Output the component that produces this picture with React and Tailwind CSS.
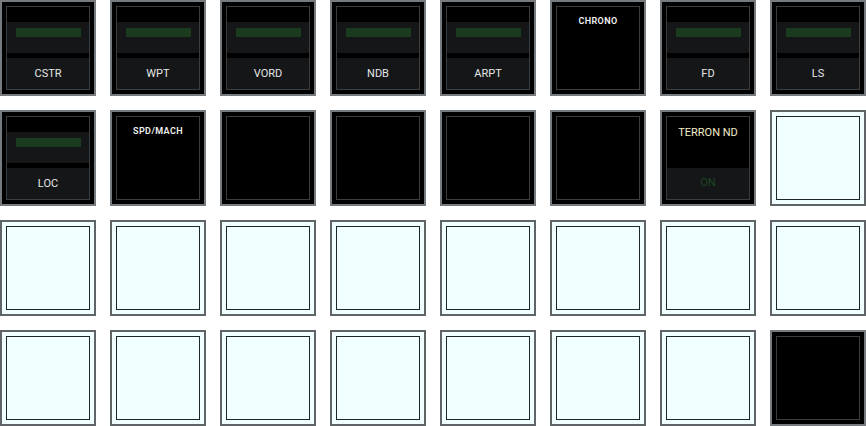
// Panneau de boutons 8x4 — style cockpit sombre + cases vides claires.

const ROWS = [
  [
    { kind: 'toggle', label: 'CSTR' },
    { kind: 'toggle', label: 'WPT' },
    { kind: 'toggle', label: 'VORD' },
    { kind: 'toggle', label: 'NDB' },
    { kind: 'toggle', label: 'ARPT' },
    { kind: 'title', label: 'CHRONO' },
    { kind: 'toggle', label: 'FD' },
    { kind: 'toggle', label: 'LS' },
  ],
  [
    { kind: 'toggle', label: 'LOC' },
    { kind: 'title', label: 'SPD/MACH' },
    { kind: 'empty' },
    { kind: 'empty' },
    { kind: 'empty' },
    { kind: 'empty' },
    { kind: 'status', label: 'TERRON ND', status: 'ON' },
    { kind: 'light' },
  ],
  Array.from({ length: 8 }, () => ({ kind: 'light' })),
  [...Array.from({ length: 7 }, () => ({ kind: 'light' })), { kind: 'empty' }],
];

function DarkShell({ children }) {
  return (
    <div className="w-24 h-24 border-2 border-[#767b80] bg-black p-1">
      <div className="h-full border border-[#3b3d3f] flex flex-col">{children}</div>
    </div>
  );
}

function Toggle({ label }) {
  return (
    <DarkShell>
      <div className="h-[15px]" />
      <div className="h-[31px] bg-[#141618] flex justify-center pt-[6px]">
        <div className="w-[65px] h-[9px] bg-[#1a3b1d]" />
      </div>
      <div className="h-[5px]" />
      <div className="flex-1 bg-[#141618] flex items-center justify-center pt-[1px]">
        <span className="font-['Roboto'] text-[11px] text-[#e6e6e6]">{label}</span>
      </div>
    </DarkShell>
  );
}

function Title({ label }) {
  return (
    <div className="w-24 h-24 border-2 border-[#767b80] bg-black p-1">
      <div className="h-full border border-[#3b3d3f] pt-[8px] text-center font-['Roboto'] font-semibold text-[9px] leading-[12px] text-[#f2f2f2] tracking-[0.4px]">
        {label}
      </div>
    </div>
  );
}

function Status({ label, status }) {
  return (
    <DarkShell>
      <div className="flex-1 flex items-start justify-center pt-[8px]">
        <span className="font-['Roboto'] text-[11px] text-[#f3ecc8]">{label}</span>
      </div>
      <div className="h-[31px] bg-[#141618] flex items-center justify-center">
        <span className="font-['Roboto'] text-[11px] text-[#1f4622]">{status}</span>
      </div>
    </DarkShell>
  );
}

function Light() {
  return (
    <div className="w-24 h-24 border-2 border-[#5f6566] bg-[#f0ffff] p-1">
      <div className="h-full border border-[#1e2626]" />
    </div>
  );
}

function Cell({ cell }) {
  if (cell.kind === 'toggle') return <Toggle label={cell.label} />;
  if (cell.kind === 'title') return <Title label={cell.label} />;
  if (cell.kind === 'status') return <Status label={cell.label} status={cell.status} />;
  if (cell.kind === 'light') return <Light />;
  return <DarkShell />;
}

export default function App() {
  return (
    <div className="w-[866px] h-[426px] bg-white grid grid-cols-[repeat(8,96px)] grid-rows-[repeat(4,96px)] gap-[14px]">
      {ROWS.flat().map((cell, i) => (
        <Cell key={i} cell={cell} />
      ))}
    </div>
  );
}
